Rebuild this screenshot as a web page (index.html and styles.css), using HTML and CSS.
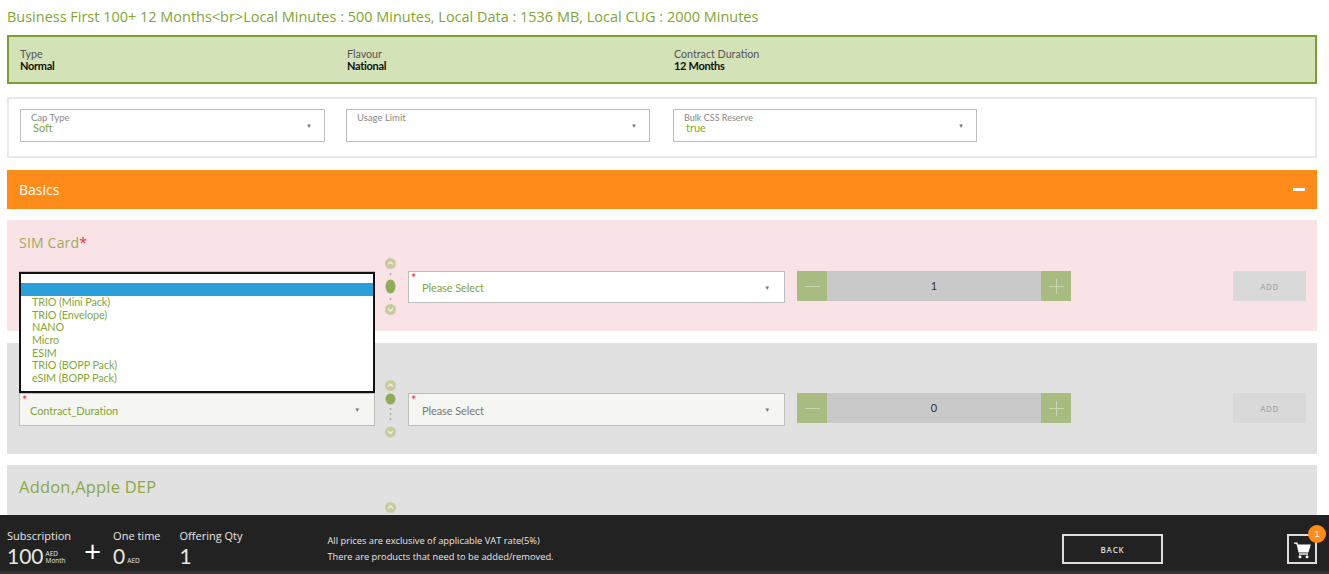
FILE: index.html
```html
<!DOCTYPE html>
<html lang="en">
<head>
  <meta charset="UTF-8" />
  <title>Business First 100+</title>
  <link rel="stylesheet" href="styles.css">
</head>
<body>

<svg class="defs" width="0" height="0">
  <symbol id="rail-top" viewBox="0 0 16 60">
    <circle cx="8" cy="7.500" r="5.500" fill="#c9cb9f"/>
    <path d="M5.500 8.500 8 6 10.500 8.500" fill="none" stroke="#f2f0e4" stroke-width="1.400"/>
    <ellipse cx="8" cy="21" rx="5" ry="5.500" fill="#8fab5c"/>
    <circle cx="8" cy="31" r="1" fill="#aaa"/>
    <circle cx="8" cy="36" r="1" fill="#aaa"/>
    <circle cx="8" cy="41" r="1" fill="#aaa"/>
    <circle cx="8" cy="54" r="5.500" fill="#c9cb9f"/>
    <path d="M5.500 53 8 55.500 10.500 53" fill="none" stroke="#f2f0e4" stroke-width="1.400"/>
  </symbol>
  <symbol id="rail-mid" viewBox="0 0 16 60">
    <circle cx="8" cy="7.500" r="5.500" fill="#c9cb9f"/>
    <path d="M5.500 8.500 8 6 10.500 8.500" fill="none" stroke="#f2f0e4" stroke-width="1.400"/>
    <circle cx="8" cy="18" r="1" fill="#b79fb5"/>
    <ellipse cx="8" cy="30.500" rx="5" ry="7" fill="#8fab5c"/>
    <circle cx="8" cy="43" r="1" fill="#b79fb5"/>
    <circle cx="8" cy="53.500" r="5.500" fill="#c9cb9f"/>
    <path d="M5.500 52.500 8 55 10.500 52.500" fill="none" stroke="#f2f0e4" stroke-width="1.400"/>
  </symbol>
</svg>

<main class="page">
  <h1 class="offer-title">Business First 100+ 12 Months&lt;br&gt;Local Minutes : 500 Minutes, Local Data : 1536 MB, Local CUG : 2000 Minutes</h1>

  <div class="summary">
    <div class="summary-item"><span>Type</span><b>Normal</b></div>
    <div class="summary-item"><span>Flavour</span><b>National</b></div>
    <div class="summary-item"><span>Contract Duration</span><b>12 Months</b></div>
  </div>

  <div class="caps">
    <div class="cap-select"><label>Cap Type</label><span>Soft</span><i class="caret">▼</i></div>
    <div class="cap-select"><label>Usage Limit</label><span></span><i class="caret">▼</i></div>
    <div class="cap-select cap-last"><label>Bulk CSS Reserve</label><span>true</span><i class="caret">▼</i></div>
  </div>

  <div class="basics">
    <span>Basics</span>
    <i class="collapse"></i>
  </div>

  <section class="group group-error">
    <h2>SIM Card<em>*</em></h2>
    <div class="row">
      <div class="select select-first">
        <ul class="options">
          <li class="blank"></li>
          <li class="active"></li>
          <li>TRIO (Mini Pack)</li>
          <li>TRIO (Envelope)</li>
          <li>NANO</li>
          <li>Micro</li>
          <li>ESIM</li>
          <li>TRIO (BOPP Pack)</li>
          <li>eSIM (BOPP Pack)</li>
        </ul>
      </div>
      <svg class="rail"><use href="#rail-mid"/></svg>
      <div class="select select-second"><em>*</em>Please Select<i class="caret">▼</i></div>
      <div class="qty">
        <button class="qty-btn qty-minus"></button>
        <span class="qty-val">1</span>
        <button class="qty-btn qty-plus"></button>
      </div>
      <button class="add">ADD</button>
    </div>
  </section>

  <section class="group group-off">
    <h2></h2>
    <div class="row">
      <div class="select select-first"><em>*</em>Contract_Duration<i class="caret">▼</i></div>
      <svg class="rail"><use href="#rail-top"/></svg>
      <div class="select select-second is-grey"><em>*</em>Please Select<i class="caret">▼</i></div>
      <div class="qty">
        <button class="qty-btn qty-minus"></button>
        <span class="qty-val">0</span>
        <button class="qty-btn qty-plus"></button>
      </div>
      <button class="add">ADD</button>
    </div>
  </section>

  <section class="group group-off">
    <h2>Addon,Apple DEP</h2>
    <div class="row">
      <div class="select select-first"></div>
      <svg class="rail"><use href="#rail-top"/></svg>
    </div>
  </section>
</main>

<footer class="bar">
  <div class="price">
    <span class="price-label">Subscription</span>
    <div class="price-value">100<small>AED<br>Month</small></div>
  </div>
  <div class="plus">+</div>
  <div class="price">
    <span class="price-label">One time</span>
    <div class="price-value">0<small>AED</small></div>
  </div>
  <div class="price price-qty">
    <span class="price-label">Offering Qty</span>
    <div class="price-value">1</div>
  </div>
  <div class="notes">
    <p>All prices are exclusive of applicable VAT rate(5%)</p>
    <p>There are products that need to be added/removed.</p>
  </div>
  <button class="back">BACK</button>
  <button class="cart">
    <svg width="18" height="18" viewBox="0 0 18 18">
      <path d="M1 2h3l2 9h9l2-7H5" fill="#fff" stroke="#fff" stroke-width="1.200"/>
      <path d="M6 13h9" stroke="#fff" stroke-width="1.400"/>
      <circle cx="7" cy="15.800" r="1.500" fill="#fff"/>
      <circle cx="14" cy="15.800" r="1.500" fill="#fff"/>
    </svg>
    <span class="badge">1</span>
  </button>
</footer>

</body>
</html>
```

FILE: styles.css
```css
html, body {
  height: 100%;
  overflow: hidden;
}

body {
  margin: 0;
  background: #fff;
  font-family: Lato, Arial, sans-serif;
  color: #333;
}

.defs {
  display: block;
  height: 0;
}

.page {
  padding: 0 12px 0 7px;
}

.offer-title {
  margin: 0;
  height: 35px;
  line-height: 34px;
  font-family: "Open Sans", sans-serif;
  font-size: 14.470px;
  font-weight: 400;
  color: #7fa532;
  white-space: nowrap;
}

.summary {
  display: flex;
  height: 49px;
  box-sizing: border-box;
  padding: 11px 11px 0;
  background: #d4e2b8;
  border: 2px solid #7c9f32;
}

.summary-item {
  width: 327px;
  display: flex;
  flex-direction: column;
  font-size: 10.700px;
  line-height: 12px;
  color: #555;
}

.summary-item b {
  color: #111;
  font-size: 11px;
  letter-spacing: -0.300px;
}

.caps {
  display: flex;
  gap: 21px;
  height: 61px;
  box-sizing: border-box;
  margin-top: 13px;
  padding: 10px 11px;
  border: 2px solid #e8e8e8;
}

.cap-select {
  position: relative;
  width: 305px;
  height: 33px;
  box-sizing: border-box;
  padding: 3px 10px;
  border: 1px solid #bdbdbd;
  font-size: 11px;
  line-height: 10px;
  color: #83a63a;
}

.cap-select + .cap-select {
  width: 304px;
}

.cap-select.cap-last {
  margin-left: 2px;
}

.cap-select label {
  display: block;
  font-size: 9.500px;
  color: #888;
}

.cap-select.cap-last label {
  font-size: 9px;
}

.cap-select span {
  display: block;
  margin-left: 2px;
}

.caret {
  position: absolute;
  right: 12px;
  top: 13px;
  font-size: 6px;
  line-height: 6px;
  font-style: normal;
  color: #777;
}

.basics {
  display: flex;
  justify-content: space-between;
  align-items: center;
  height: 39px;
  margin-top: 12px;
  padding: 0 12px;
  background: #ff8c1a;
  color: #fff;
  font-family: "Open Sans", sans-serif;
  font-size: 14px;
}

.collapse {
  width: 12px;
  height: 3px;
  background: #fff;
}

.group {
  height: 111px;
  box-sizing: border-box;
  margin-top: 11px;
  padding: 0 11px 0 12px;
}

.group-error + .group-off {
  margin-top: 12px;
}

.group-error {
  background: #fae3e6;
}

.group-off {
  background: #e1e1e1;
}

.group h2 {
  margin: 0;
  height: 51px;
  padding-top: 13px;
  box-sizing: border-box;
  line-height: 20px;
  font-family: "Open Sans", sans-serif;
  font-size: 14px;
  font-weight: 400;
  letter-spacing: 0.200px;
  color: #8aa848;
}

.group-off h2 {
  height: 50px;
  padding-top: 12px;
  font-size: 16.500px;
}

.group-error h2 {
  color: #9dab5e;
}

.group h2 em {
  color: #e8303a;
  font-style: normal;
}

.row {
  display: flex;
  align-items: flex-start;
}

.select {
  position: relative;
  height: 33px;
  box-sizing: border-box;
  padding-top: 9px;
  padding-left: 10px;
  background: #f5f5f2;
  border: 1px solid #bdbdbd;
  font-size: 11px;
  letter-spacing: -0.100px;
  line-height: 16px;
  color: #83a63a;
}

.group-error .select {
  height: 32px;
  padding-top: 8px;
}

.select-first {
  width: 356px;
}

.select-second {
  width: 377px;
  padding-left: 13px;
  background: #fff;
}

.select-second.is-grey {
  background: #f5f5f2;
  color: #777;
}

.select > em {
  position: absolute;
  left: 2px;
  top: 0;
  color: #e8303a;
  font-style: normal;
  font-size: 13px;
  line-height: 12px;
}

.select .caret {
  right: 14px;
}

.rail {
  flex: none;
  width: 31px;
  height: 60px;
  margin: -15px 2px 0 0;
}

.options {
  position: absolute;
  left: -1px;
  top: 0;
  z-index: 2;
  width: 356px;
  height: 121px;
  box-sizing: border-box;
  margin: 0;
  padding: 0;
  list-style: none;
  background: #fff;
  border: 2px solid #111;
  font-size: 10.800px;
  line-height: 12.700px;
  color: #83a63a;
}

.options li {
  height: 12.700px;
  padding-left: 11px;
}

.options .blank {
  height: 9px;
}

.options .active {
  height: 13px;
  background: #2a9fd8;
}

.qty {
  display: flex;
  width: 274px;
  height: 30px;
  margin-left: 12px;
  background: #c9c9c9;
}

.qty-btn {
  width: 30px;
  padding: 0;
  border: none;
  background-color: #a8bb80;
  background-repeat: no-repeat;
  background-position: center;
}

.qty-minus {
  background-image: linear-gradient(#c9d6b0, #c9d6b0);
  background-size: 15px 1px;
}

.qty-plus {
  background-image: linear-gradient(#c9d6b0, #c9d6b0), linear-gradient(#c9d6b0, #c9d6b0);
  background-size: 15px 1px, 1px 15px;
}

.qty-val {
  flex: 1;
  text-align: center;
  font-size: 11px;
  line-height: 30px;
  color: #333;
}

.add {
  width: 73px;
  height: 30px;
  margin-left: auto;
  padding: 0;
  border: none;
  background: #dad9da;
  color: #aaa;
  font-family: "Open Sans", sans-serif;
  font-size: 8px;
  font-weight: 600;
  letter-spacing: 0.500px;
}

.bar {
  position: fixed;
  left: 0;
  right: 0;
  bottom: 0;
  z-index: 3;
  display: flex;
  align-items: flex-start;
  height: 59px;
  box-sizing: border-box;
  padding: 0 12px 0 7px;
  background: #222;
  border-bottom: 3px solid #333;
  color: #e6e6e6;
  font-family: "Open Sans", sans-serif;
}

.price {
  padding-top: 14px;
}

.price-label {
  display: block;
  font-size: 11px;
  line-height: 14px;
}

.price-value {
  display: flex;
  align-items: flex-end;
  margin-top: 1px;
  font-family: Lato, sans-serif;
  font-size: 21px;
  line-height: 23px;
}

.price-value small {
  margin: 0 0 3px 2px;
  font-family: "Open Sans", sans-serif;
  font-size: 6.500px;
  line-height: 7px;
}

.plus {
  width: 16px;
  margin: 18px 13px 0 13px;
  font-size: 30px;
  line-height: 36px;
  text-align: center;
  color: #fff;
}

.price-qty {
  margin-left: 19px;
}

.notes {
  margin-left: 85px;
  padding-top: 18px;
  font-size: 9.300px;
  line-height: 15.500px;
}

.notes p {
  margin: 0;
}

.back {
  width: 101px;
  height: 30px;
  margin: 19px 0 0 auto;
  background: none;
  border: 2px solid #ddd;
  color: #ddd;
  font-family: "Open Sans", sans-serif;
  font-size: 8px;
  font-weight: 600;
  letter-spacing: 0.800px;
}

.cart {
  position: relative;
  width: 30px;
  height: 30px;
  margin: 19px 0 0 124px;
  padding: 4px 0 0;
  background: none;
  border: 2px solid #ddd;
}

.badge {
  position: absolute;
  right: -11px;
  top: -11px;
  width: 18px;
  height: 18px;
  border-radius: 50%;
  background: #ff8c1a;
  color: #fff;
  font-size: 9px;
  line-height: 18px;
  text-align: center;
}
```
